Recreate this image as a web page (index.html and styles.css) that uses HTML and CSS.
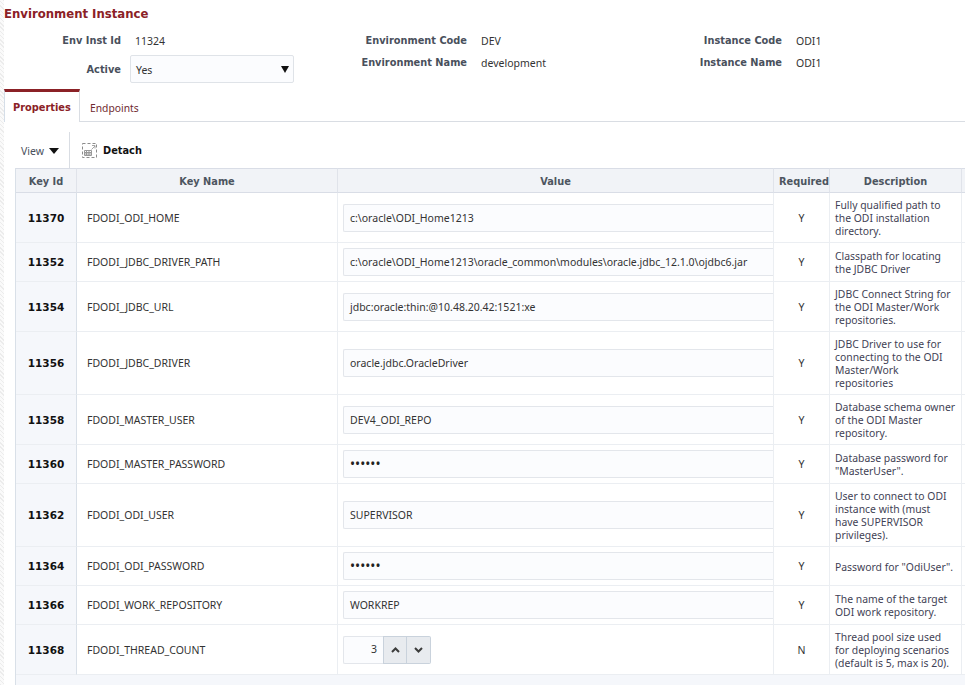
FILE: index.html
```html
<!DOCTYPE html>
<html lang="en">
<head>
    <meta charset="UTF-8">
    <meta name="viewport" content="width=device-width, initial-scale=1.0">
    <title>Environment Instance</title>
    <link rel="stylesheet" href="styles.css">
</head>
<body>
    <div class="page">
        <div class="content">
        <h1 class="title">Environment Instance</h1>

        <div class="form">
            <div class="form-col col-first">
                <div class="form-row row-id"><label>Env Inst Id</label><span>11324</span></div>
                <div class="form-row row-active">
                    <label>Active</label>
                    <div class="select"><span>Yes</span><svg width="8" height="7" viewBox="0 0 8 7"><path d="M0 0H8L4 7Z" fill="#111"/></svg></div>
                </div>
            </div>
            <div class="form-col">
                <div class="form-row row-id"><label>Environment Code</label><span>DEV</span></div>
                <div class="form-row row-name"><label>Environment Name</label><span>development</span></div>
            </div>
            <div class="form-col">
                <div class="form-row row-id"><label>Instance Code</label><span>ODI1</span></div>
                <div class="form-row row-name"><label>Instance Name</label><span>ODI1</span></div>
            </div>
        </div>

        <div class="tabs">
            <a class="tab active">Properties</a>
            <a class="tab">Endpoints</a>
        </div>

        <div class="toolbar">
            <div class="view-menu">View <svg width="10" height="6" viewBox="0 0 10 6"><path d="M0 0H10L5 6Z" fill="#111"/></svg></div>
            <div class="detach">
                <svg width="15" height="15" viewBox="0 0 15 15" fill="none">
                    <rect x=".5" y=".5" width="14" height="14" stroke="#8c8c8c" stroke-dasharray="3 2"/>
                    <path d="M9.500 6.500L13 3M10 2.500H13V5.500" stroke="#a5a5a5"/>
                    <path d="M2.500 7.500H9.500V12.500H2.500ZM2.500 9.500H9.500M2.500 11H9.500M4.500 7.500V12.500M7 7.500V12.500" stroke="#999"/>
                </svg>
                <span>Detach</span>
            </div>
        </div>

        <div class="table-wrap">
            <table class="props">
                <colgroup>
                    <col class="c-id"><col class="c-name"><col class="c-value"><col class="c-req"><col class="c-desc"><col>
                </colgroup>
                <thead>
                    <tr><th>Key Id</th><th>Key Name</th><th>Value</th><th class="th-req">Required</th><th>Description</th><th></th></tr>
                </thead>
                <tbody>
                    <tr>
                        <td class="key-id">11370</td><td class="key-name">FDODI_ODI_HOME</td>
                        <td class="val"><div class="input">c:\oracle\ODI_Home1213</div></td>
                        <td class="req">Y</td><td class="desc">Fully qualified path to the ODI installation directory.</td><td></td>
                    </tr>
                    <tr>
                        <td class="key-id">11352</td><td class="key-name">FDODI_JDBC_DRIVER_PATH</td>
                        <td class="val"><div class="input">c:\oracle\ODI_Home1213\oracle_common\modules\oracle.jdbc_12.1.0\ojdbc6.jar</div></td>
                        <td class="req">Y</td><td class="desc">Classpath for locating the JDBC Driver</td><td></td>
                    </tr>
                    <tr>
                        <td class="key-id">11354</td><td class="key-name">FDODI_JDBC_URL</td>
                        <td class="val"><div class="input">jdbc:oracle:thin:@10.48.20.42:1521:xe</div></td>
                        <td class="req">Y</td><td class="desc">JDBC Connect String for the ODI Master/Work repositories.</td><td></td>
                    </tr>
                    <tr>
                        <td class="key-id">11356</td><td class="key-name">FDODI_JDBC_DRIVER</td>
                        <td class="val"><div class="input">oracle.jdbc.OracleDriver</div></td>
                        <td class="req">Y</td><td class="desc">JDBC Driver to use for connecting to the ODI Master/Work repositories</td><td></td>
                    </tr>
                    <tr>
                        <td class="key-id">11358</td><td class="key-name">FDODI_MASTER_USER</td>
                        <td class="val"><div class="input">DEV4_ODI_REPO</div></td>
                        <td class="req">Y</td><td class="desc">Database schema owner of the ODI Master repository.</td><td></td>
                    </tr>
                    <tr>
                        <td class="key-id">11360</td><td class="key-name">FDODI_MASTER_PASSWORD</td>
                        <td class="val"><div class="input secret">••••••</div></td>
                        <td class="req">Y</td><td class="desc">Database password for "MasterUser".</td><td></td>
                    </tr>
                    <tr>
                        <td class="key-id">11362</td><td class="key-name">FDODI_ODI_USER</td>
                        <td class="val"><div class="input">SUPERVISOR</div></td>
                        <td class="req">Y</td><td class="desc">User to connect to ODI instance with (must have SUPERVISOR privileges).</td><td></td>
                    </tr>
                    <tr>
                        <td class="key-id">11364</td><td class="key-name">FDODI_ODI_PASSWORD</td>
                        <td class="val"><div class="input secret">••••••</div></td>
                        <td class="req">Y</td><td class="desc">Password for "OdiUser".</td><td></td>
                    </tr>
                    <tr>
                        <td class="key-id">11366</td><td class="key-name">FDODI_WORK_REPOSITORY</td>
                        <td class="val"><div class="input">WORKREP</div></td>
                        <td class="req">Y</td><td class="desc">The name of the target ODI work repository.</td><td></td>
                    </tr>
                    <tr>
                        <td class="key-id">11368</td><td class="key-name">FDODI_THREAD_COUNT</td>
                        <td class="val">
                            <div class="spinner">
                                <div class="spin-value">3</div>
                                <div class="spin-btn"><svg width="9" height="6" viewBox="0 0 9 6" fill="none"><path d="M1 5L4.500 1.500L8 5" stroke="#3c3c3c" stroke-width="2"/></svg></div>
                                <div class="spin-btn spin-last"><svg width="9" height="6" viewBox="0 0 9 6" fill="none"><path d="M1 1L4.500 4.500L8 1" stroke="#3c3c3c" stroke-width="2"/></svg></div>
                            </div>
                        </td>
                        <td class="req">N</td><td class="desc">Thread pool size used for deploying scenarios (default is 5, max is 20).</td><td></td>
                    </tr>
                </tbody>
            </table>
        </div>
        </div>
    </div>
</body>
</html>
```

FILE: styles.css
```css
html, body {
    margin: 0;
    padding: 0;
    height: 100%;
    overflow: hidden;
}

body {
    font-family: "Noto Sans", "Open Sans", sans-serif;
    font-size: 10.500px;
    color: #333;
    background-color: #fff;
}

.page {
    height: 685px;
    box-sizing: border-box;
    padding-left: 4px;
    overflow: hidden;
    background: repeating-linear-gradient(45deg, #ececec 0 1px, #fafafa 1px 3px);
}

.content {
    height: 100%;
    background-color: #fff;
}

.title {
    margin: 0;
    padding-top: 7px;
    height: 25px;
    box-sizing: border-box;
    font-family: "DejaVu Sans", sans-serif;
    font-size: 11.700px;
    line-height: 15px;
    font-weight: bold;
    color: #8b2126;
}

.form {
    display: flex;
    height: 58px;
    padding-top: 6px;
}

.form-col {
    flex: none;
    width: 315px;
}

.col-first {
    width: 342px;
}

.form-row {
    display: flex;
    align-items: center;
    line-height: 14px;
}

.form-row label {
    width: 121px;
    margin-right: 14px;
    padding-top: 2px;
    text-align: right;
    white-space: nowrap;
    font-family: "DejaVu Sans", sans-serif;
    font-size: 9.800px;
    font-weight: bold;
    color: #49505c;
}

.col-first label {
    width: 117px;
}

.form-row > span {
    padding-top: 2px;
}

.row-id {
    height: 18px;
}

.row-name {
    height: 18px;
    margin-top: 4px;
}

.row-active {
    margin-top: 6px;
}

.row-active label {
    margin-right: 9px;
}

.select {
    display: flex;
    align-items: center;
    justify-content: space-between;
    width: 164px;
    height: 28px;
    box-sizing: border-box;
    padding: 0 4px 0 5px;
    background-color: #fbfcfe;
    border: 1px solid #dfe3e8;
    border-radius: 2px;
}

.select span {
    padding-top: 2px;
}

.tabs {
    display: flex;
    height: 32px;
    border-bottom: 1px solid #d9dde3;
}

.tab {
    padding: 0 10px;
    font-size: 10.300px;
    line-height: 38px;
    color: #6f2a30;
}

.tab.active {
    width: 76px;
    height: 33px;
    box-sizing: border-box;
    border-top: 3px solid #8b2126;
    border-right: 1px solid #d9dde3;
    border-left: 1px solid #d5dee8;
    background-color: #fff;
    line-height: 32px;
    padding: 0 8px;
    font-family: "DejaVu Sans", sans-serif;
    font-size: 9.800px;
    font-weight: bold;
    color: #8b2126;
}

.toolbar {
    display: flex;
    align-items: center;
    height: 36px;
    margin-top: 10px;
}

.view-menu {
    display: flex;
    align-items: center;
    gap: 5px;
    width: 48px;
    height: 35px;
    padding: 1px 0 0 17px;
    border-right: 1px solid #d9dde3;
    color: #49505c;
}

.detach {
    display: flex;
    align-items: center;
    gap: 6px;
    padding-left: 12px;
    font-family: "DejaVu Sans", sans-serif;
    font-size: 9.800px;
    font-weight: bold;
    color: #111;
}

.table-wrap {
    margin-left: 11px;
    background-color: #f5f7fb;
    height: 517px;
    border-left: 1px solid #d9e0e8;
    overflow: hidden;
}

.props {
    width: 950px;
    table-layout: fixed;
    border-collapse: separate;
    border-spacing: 0;
    background-color: #fff;
}

.c-id { width: 61px; }
.c-name { width: 261px; }
.c-value { width: 436px; }
.c-req { width: 56px; }
.c-desc { width: 132px; }

.props th {
    height: 22px;
    padding: 1px 0 0;
    background-color: #f1f3f7;
    border-top: 1px solid #d9dde6;
    border-bottom: 1px solid #d9dde6;
    border-right: 1px solid #e0e3ea;
    font-family: "DejaVu Sans", sans-serif;
    font-size: 9.800px;
    font-weight: bold;
    color: #4d5560;
    white-space: nowrap;
    overflow: hidden;
}

.props .th-req {
    padding-left: 5px;
}

.props td {
    padding: 5px;
    border-bottom: 1px solid #ebeef2;
    border-right: 1px solid #ebeef2;
    line-height: 13px;
    vertical-align: middle;
    overflow: hidden;
}

.props .key-id {
    padding: 1px 0 0;
    text-align: center;
    background-color: #f5f7fb;
    border-right: 1px solid #d9e0e8;
    font-family: "DejaVu Sans", sans-serif;
    font-weight: bold;
    color: #111;
}

.props .key-name {
    padding: 1px 5px 0 10px;
    white-space: nowrap;
}

.props .val {
    padding-right: 0;
}

.input {
    height: 28px;
    box-sizing: border-box;
    padding-left: 6px;
    line-height: 26px;
    white-space: nowrap;
    background-color: #fbfcfe;
    border: 1px solid #e3e6eb;
    border-right: none;
    border-radius: 2px 0 0 2px;
}

.secret {
    font-size: 13.500px;
    color: #222;
}

.spinner {
    display: flex;
    width: 88px;
    height: 28px;
}

.spin-value {
    width: 40px;
    box-sizing: border-box;
    padding-right: 6px;
    text-align: right;
    line-height: 24px;
    background-color: #fbfcfe;
    border: 1px solid #e3e6eb;
    border-right: none;
    border-radius: 2px 0 0 2px;
}

.spin-btn {
    display: flex;
    align-items: center;
    justify-content: center;
    width: 24px;
    box-sizing: border-box;
    background-color: #e8ebef;
    border: 1px solid #c9d2dc;
}

.spin-last {
    border-left: none;
    border-radius: 0 2px 2px 0;
}

.props .req {
    padding: 1px 0 0;
    text-align: center;
}

.props .desc {
    padding: 6px 5px 4px 5px;
    font-size: 10.400px;
    color: #3f3f55;
}
```
